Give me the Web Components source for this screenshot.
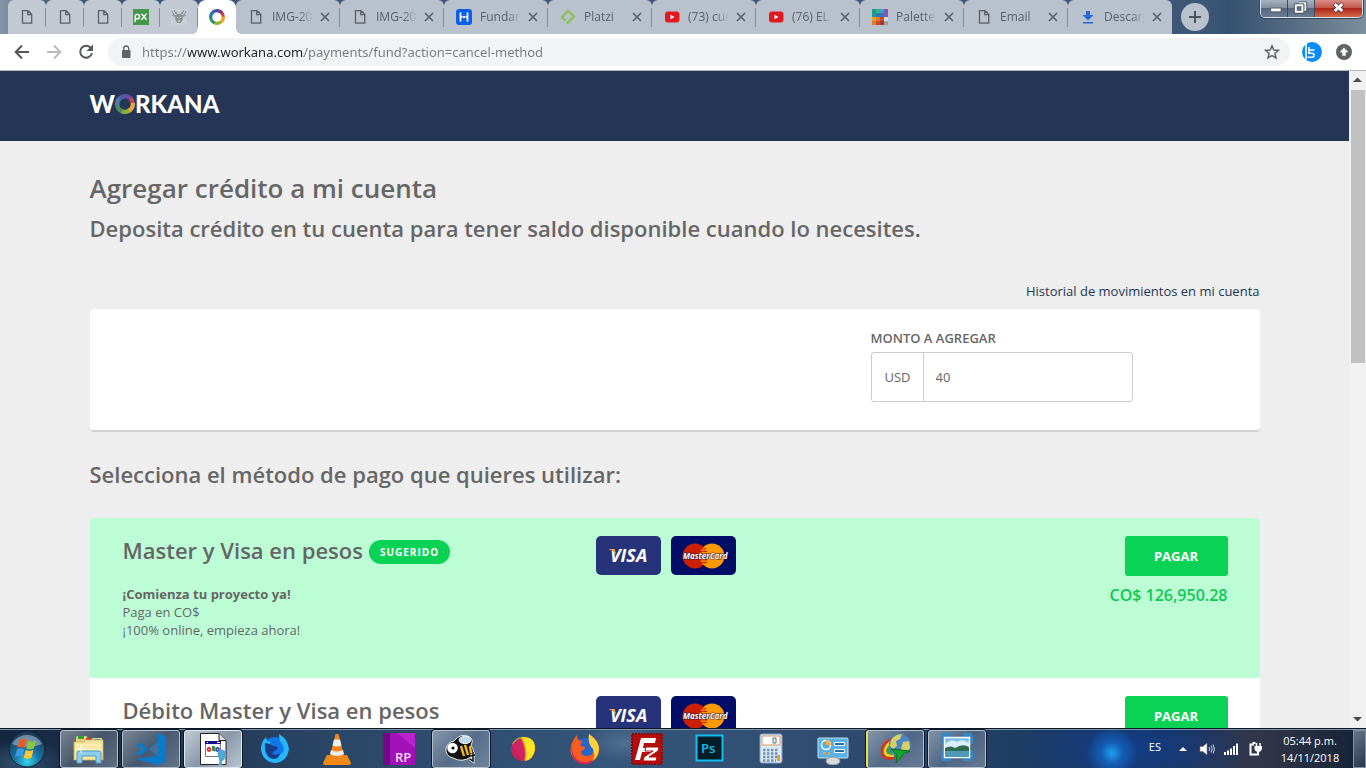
<!DOCTYPE html>
<html lang="es">
<head>
<meta charset="utf-8">
<title>Workana - Agregar crédito a mi cuenta</title>
<style>
  html, body { margin: 0; height: 100%; }
  body { font-family: "Open Sans", "Noto Sans", sans-serif; overflow: hidden; }
</style>
</head>
<body>
<desktop-screen></desktop-screen>

<script>
const define = (name, html, setup) => {
  const template = document.createElement('template');
  template.innerHTML = html;
  customElements.define(name, class extends HTMLElement {
    constructor() {
      super();
      this.attachShadow({ mode: 'open' }).append(template.content.cloneNode(true));
    }
    connectedCallback() { if (setup) setup(this, this.shadowRoot); }
  });
};

const icons = {
  file: ['0 0 16 16', '<path d="M3.500 1.700h5.600l3.600 3.600v8.900H3.500z M8.800 2v3.700h3.700" fill="none" stroke="#5b5f66" stroke-width="1.300"/>'],
  px: ['0 0 16 16', '<path fill="#45984b" d="M0 0h16v16H0z"/><path d="M2.200 13V7.500a2.200 2.200 0 1 1 2.200 2.300H3M8.500 4.600l5 6.200M13.500 4.600l-5 6.200" fill="none" stroke="#fff" stroke-width="1.400"/>'],
  deer: ['0 0 16 16', '<path fill="#c9ced4" d="M0 0h16v16H0z"/><path d="M1 2l2 4 3 1M15 2l-2 4-3 1M3 1l2 4M13 1l-2 4M1 6l4 2M15 6l-4 2M5 3l2 4M11 3L9 7" fill="none" stroke="#858b90"/><path d="M5 6l3-1 3 1 1 4-2 4H6l-2-4z" fill="#8d9296"/><path d="M6 8l1 1M10 8L9 9M7 12h2" stroke="#e9ecef"/>'],
  ring: ['0 0 16 16', '<g fill="none" stroke-width="3.200"><path d="M8 1.700A6.300 6.300 0 0 1 13.500 5" stroke="#7a3a86"/><path d="M12.700 3.800A6.300 6.300 0 0 1 14.300 8" stroke="#d2413f"/><path d="M14.300 7.500A6.300 6.300 0 0 1 10.500 13.800" stroke="#f2a11f"/><path d="M11.300 13.300A6.300 6.300 0 0 1 5 13.500" stroke="#86b735"/><path d="M5.500 13.800A6.300 6.300 0 0 1 1.700 8" stroke="#33926b"/><path d="M1.700 8.500A6.300 6.300 0 0 1 4.300 2.900" stroke="#2b79b9"/><path d="M3.800 3.300A6.300 6.300 0 0 1 8.500 1.700" stroke="#4355a2"/></g>'],
  hh: ['0 0 16 16', '<rect width="16" height="16" rx="3" fill="#0d5fe8"/><path d="M4.500 3.500v9M11.500 3.500v9" stroke="#fff" stroke-width="1.700"/><path d="M5 8h1.500M9.500 8H11" stroke="#fff" stroke-width="1.400"/><circle cx="8" cy="8" r="1.200" fill="#fff"/>'],
  platzi: ['0 0 16 16', '<path d="M5.500 11.500L2 8l6.200-6.300L14 7.500l-6.500 6.600" fill="none" stroke="#8cc152" stroke-width="2.200" stroke-linejoin="round"/><circle cx="7.500" cy="14" r="1.300" fill="#8cc152"/>'],
  youtube: ['0 0 16 16', '<rect x="1" y="2.500" width="14.500" height="11" rx="3" fill="#e11a22"/><path d="M6.500 5.700v4.600L10.500 8z" fill="#fff"/>'],
  palette: ['0 0 16 16', '<path fill="#1f9b8e" d="M0 0h4v8H0z"/><path fill="#2eb67d" d="M4 0h4v4H4z"/><path fill="#3fa0d0" d="M8 0h4v4H8z"/><path fill="#3277b5" d="M4 4h8v4H4z"/><path fill="#8657aa" d="M12 0h4v8h-4z"/><path fill="#dfa52f" d="M0 8h4v4H0z"/><path fill="#da7b20" d="M4 8h4v4H4zM0 12h4v4H0z"/><path fill="#cf4634" d="M8 8h4v4H8zM4 12h4v4H4z"/><path fill="#a93226" d="M8 12h4v4H8z"/><path fill="#d6dadd" d="M12 8h4v4h-4z"/><path fill="#98a1a9" d="M12 12h4v4h-4z"/>'],
  download: ['0 0 16 16', '<path fill="#2468d6" d="M6 2h4v4h3.500L8 11.500 2.500 6H6zM3 13h10v1.500H3z"/>'],
  close: ['0 0 12 12', '<path d="M2 2l8 8M10 2l-8 8" stroke="#585d64" stroke-width="1.600"/>'],
  plus: ['0 0 28 28', '<circle cx="14" cy="14" r="14" fill="#b9c1cd"/><path d="M14 8v12M8 14h12" stroke="#4b5057" stroke-width="2"/>'],
  back: ['0 0 20 20', '<path d="M17 10H4M10 3.500L3.700 10l6.300 6.500" fill="none" stroke="#55585d" stroke-width="2"/>'],
  forward: ['0 0 20 20', '<path d="M3 10h13M10 3.500l6.300 6.500-6.300 6.500" fill="none" stroke="#babbbd" stroke-width="2"/>'],
  reload: ['0 0 20 20', '<path d="M15.300 6.500A6 6 0 1 0 16 11.300" fill="none" stroke="#55585d" stroke-width="2"/><path d="M17 2.500v6.500h-6.500z" fill="#55585d"/>'],
  lock: ['0 0 16 16', '<rect x="4" y="6" width="8.500" height="8" rx="1" fill="#5f6368"/><path d="M5.700 6V4.500a2.500 2.500 0 0 1 5 0V6" fill="none" stroke="#5f6368" stroke-width="1.300"/>'],
  star: ['0 0 20 20', '<path d="M10 3.800l1.800 4.200 4.600.4-3.500 3 1.100 4.500-4-2.400-4 2.400 1.100-4.500-3.500-3 4.600-.4z" fill="none" stroke="#5f6368" stroke-width="1.500"/>'],
  ext: ['0 0 20 20', '<circle cx="10" cy="10" r="10" fill="#0a8bfa"/><path d="M4 2v15.500M12.500 8H7v3.300h3a2 2 0 0 1 0 4H5.500M7 5v4" fill="none" stroke="#fff" stroke-width="1.600"/>'],
  update: ['0 0 20 20', '<circle cx="10" cy="10" r="8" fill="#5f6368"/><path d="M10 5.500l4.300 4.700h-2.600v3.600H8.300v-3.600H5.700z" fill="#fff"/>'],
  min: ['0 0 26 18', '<rect x="9.500" y="8.500" width="11" height="4" fill="#fff" stroke="#59626d"/>'],
  restore: ['0 0 26 18', '<path d="M10.500 3.500h7v7h-2" fill="none" stroke="#48515d" stroke-width="4"/><path d="M10.500 3.500h7v7h-2" fill="none" stroke="#fff" stroke-width="2"/><rect x="7.500" y="5.500" width="7" height="7" fill="#5b6b7e" stroke="#48515d" stroke-width="4"/><rect x="7.500" y="5.500" width="7" height="7" fill="#5b6b7e" stroke="#fff" stroke-width="2"/>'],
  winclose: ['0 0 48 18', '<path d="M19.500 4l9 8M28.500 4l-9 8" stroke="#574347" stroke-width="5"/><path d="M20 4.400l8 7.200M28 4.400l-8 7.200" stroke="#fff" stroke-width="3"/>'],
  up: ['0 0 17 17', '<path d="M4 11h9L8.500 6.500z" fill="#4a4a4a"/>'],
  down: ['0 0 17 17', '<path d="M4 6h9l-4.500 4.500z" fill="#4a4a4a"/>'],
  visa: ['0 0 65 39', '<rect width="65" height="39" rx="5" fill="#26337a"/><text x="14" y="26" font-family="Open Sans" font-size="18" font-weight="700" font-style="italic" fill="#fff">VISA</text><path d="M13 13h5.500l2.500 7c-1.500-3-4-5.500-8-6.500z" fill="#f2a12e"/>'],
  master: ['0 0 65 39', '<rect width="65" height="39" rx="5" fill="#000c66"/><circle cx="41" cy="20" r="12.500" fill="#ff9a00"/><circle cx="24" cy="20" r="12.500" fill="#cc1f00"/><path d="M32.500 11a12.500 12.500 0 0 1 0 18 12.500 12.500 0 0 1 0-18" fill="#ff9a00"/><path d="M30 13h5M29 15.500h7M28 18h8M28 24h8M29 26.500h7" stroke="#cc1f00" stroke-width="1.200"/><text x="12" y="23" font-family="Open Sans" font-size="8" font-weight="700" font-style="italic" fill="#fff" stroke="#3a1633" stroke-width="1" paint-order="stroke">MasterCard</text>'],
  start: ['0 0 40 40', '<defs><radialGradient id="o" cx=".5" cy=".85" r=".75"><stop offset="0" stop-color="#33d6ee"/><stop offset=".45" stop-color="#1a75a6"/><stop offset="1" stop-color="#1b3a58"/></radialGradient></defs><circle cx="20" cy="20" r="18" fill="url(#o)" stroke="#10202f"/><path d="M5 15a16 14 0 0 1 30 0c-9 4-20 4-30 0z" fill="#d5e4ee" opacity=".45"/><path d="M12.500 11c3-1.700 5-1.300 7.300 0l-2 7.800c-2.300-1.300-4.500-1.300-7.300 0z" fill="#ef5a24"/><path d="M21.200 11.700c2.500 1.300 4.800 1.300 7.800 0l-2.200 7.800c-3 1.300-5 1.200-7.500 0z" fill="#8cc63e"/><path d="M10 20.300c3-1.500 5-1.200 7.300 0l-2 7.700c-2.300-1.300-4.500-1.300-7.300 0z" fill="#3f9be0"/><path d="M18.800 21c2.500 1.300 4.700 1.300 7.700 0l-2.200 7.700c-2.800 1.300-5 1.200-7.500 0z" fill="#fdc82f"/>'],
  explorer: ['0 0 32 32', '<path d="M3 5l1-2h9l2 2h14v22H3z" fill="#e7cf7c"/><path d="M5 3h6v3H5z" fill="#2aa63a"/><path d="M13 5h6v3h-6z" fill="#d33a2f"/><path d="M21 6h6v3h-6z" fill="#2f93d8"/><path d="M1 9h10l2-2h17v20H1z" fill="#f7e6a2" stroke="#cfae52" stroke-width=".8"/><path d="M3 12h26M3 16h26" stroke="#fff5c8"/><path d="M4 30V20q0-2 2-2h20q2 0 2 2v10h-5v-7H9v7z" fill="#8fcdec" stroke="#4c9cc9"/><path d="M8 12v8M4 16h8" stroke="#fff" stroke-width="1"/>'],
  vscode: ['0 0 32 32', '<path d="M23 0l8 3.500v25L23 32 1 26l22-3z" fill="#0a7acb"/><path d="M23 0v8L5 22.500l-4-2 4.500-4.500L1 11.500l4-2L23 24v8" fill="#0a7acb"/><path d="M5.500 13.500v5L8.500 16zM14 16l9 7V9z" fill="#506c8e"/>'],
  script: ['0 0 32 32', '<path d="M3.500.5H22l7 7v24H3.500z" fill="#fff" stroke="#222"/><path d="M22 .5v7h7" fill="#ddd" stroke="#222"/><path d="M8.500 8.500h15v15h-15z" fill="#fff" stroke="#777"/><path d="M8 8h16v3H8z" fill="#10108c"/><path d="M10 9.500h1M20 9.500h3" stroke="#fff"/><g fill="none" stroke-width="1.800"><circle cx="12" cy="16.500" r="1.500" stroke="#d33"/><path d="M16 13v5M18 14l-2 2 2 2" stroke="#278a3a"/><circle cx="20.500" cy="16.500" r="1.500" stroke="#3b49c4"/></g><path d="M21 18q4-3 7 0v6q0 3-3 4v4h-4q2-3 1-6-2-4-1-8z" fill="#52a7d8"/>'],
  firedev: ['0 0 32 32', '<circle cx="16" cy="17" r="13" fill="#1176e8"/><path d="M20 1q9 5 10 15-2 13-14 14Q3 28 2 16q0-7 5-12l1 4 4 1q-3 4-1 9 4 8 11 3 5-4 1-10-3-3-3-10z" fill="#25b7fb"/><path d="M6 10q4 0 8 3l5 1q-1 3-4 4l-2 3q5 2 8-1-1 6-7 6-9-2-8-16z" fill="#173b85"/>'],
  vlc: ['0 0 32 32', '<path d="M6 22h20l4 8q0 2-2 2H4q-2 0-2-2z" fill="#f18a14"/><path d="M14.500 1h3l6 24q-7 4-15 0z" fill="#f4851c"/><path d="M13 6.500h6l1.500 6q-4 2-9 0zM10 17q6 3 12 0l1 4q-7 4-14 0z" fill="#eceef0"/>'],
  rp: ['0 0 32 32', '<path d="M0 0h32v32H0z" fill="#a410b8"/><path d="M0 0h5.500v32H0z" fill="#76078c"/><path d="M6 0v32" stroke="#3b0b50"/><path d="M14 0h18v15z" fill="#bd22cf"/><text x="12" y="29" font-family="Open Sans" font-size="13" font-weight="600" fill="#f5dff7">RP</text>'],
  bee: ['0 0 32 32', '<path d="M9 8q7-9 16-4 4 3 1 8 5 8 0 12-9 6-18 1Q0 23 1 15q2-6 8-7z" fill="#111" stroke="#ececec"/><path d="M16 13l3 10M20 12l3 10M25 13l1 7" stroke="#f4b818" stroke-width="2.400"/><ellipse cx="20" cy="7" rx="6" ry="3.700" fill="#bed9ee" stroke="#eef5fa"/><circle cx="7.500" cy="15" r="5.300" fill="#fff"/><circle cx="8" cy="15" r="1.600" fill="#111"/><path d="M25 23l5-1M28 19v9l-3-2" fill="none" stroke="#eee" stroke-width="3"/><path d="M25 23l5-1M28 19v9l-3-2" fill="none" stroke="#111" stroke-width="1.500"/>'],
  fan: ['0 0 32 32', '<circle cx="16" cy="16" r="12" fill="#c8215b"/><path d="M16 28Q11 14 5 11q4-8 12-7z" fill="#8db83c"/><path d="M5 13q3-6 9-8 6 9 6 21l-4 2z" fill="#d22362"/><path d="M14 4q15-1 14 13-2 10-10 11Q20 12 14 4z" fill="#ffe51f"/><path d="M18 28q3-12-4-24" fill="none" stroke="#df9e2c" stroke-width="1.500"/>'],
  firefox: ['0 0 32 32', '<circle cx="16" cy="18" r="13" fill="#2267c9"/><path d="M20 1q8 5 10 13 1 9-6 14-10 6-18-1Q-1 20 3 10q2-5 5-8l1 5 5 1q-4 3-2 5l4 1q0 3-4 4 0 5 6 5 8-1 6-9-4-4-3-13z" fill="#fc5b22"/><path d="M20 1q9 6 10 14 0 9-7 13 4-5 1-12-6-6-4-15z" fill="#ffd23c"/><path d="M3 12q-1 12 8 16 8 3 14-2-4 7-12 5Q0 28 3 12z" fill="#d72756"/>'],
  filezilla: ['0 0 32 32', '<path d="M1 1h30v30H1z" fill="#b50c0c" stroke="#8c0808" stroke-width="2" stroke-dasharray="2 1"/><path d="M10 5h15l-1 5H13l-1 5h9l-1 4h-9l-2 8H4z" fill="#fff"/><path d="M15 14h13l-1 4-9 6h8l-1 4H12l1-4 9-6h-8z" fill="#fff" stroke="#b50c0c"/>'],
  ps: ['0 0 32 32', '<path d="M3.500 2.500h26v25h-26z" fill="#001d27" stroke="#12bdf2" stroke-width="2"/><text x="8" y="20" font-family="Open Sans" font-size="13" font-weight="600" fill="#12bdf2">Ps</text>'],
  calc: ['0 0 32 32', '<rect x="5" y="1" width="22" height="29" rx="2" fill="#dceaf5" stroke="#7fa3c3"/><path d="M7 3h18v9H7z" fill="#fdfefe" stroke="#d79a55"/><path d="M18 5h3v5h-3z" fill="none" stroke="#4a6885"/><path d="M8 17h16M8 20.500h16M8 24h16M8 27.500h13" stroke="#6e93ae" stroke-width="2.500" stroke-dasharray="2.500 1.500"/><path d="M22 22h3v6h-3z" fill="#f39a2b"/>'],
  panel: ['0 0 32 32', '<rect x="1" y="5" width="30" height="20" rx="1" fill="#59b2e6" stroke="#bfe1f5"/><circle cx="9" cy="12" r="4.500" fill="#57aee0" stroke="#fff" stroke-width="1.500"/><path d="M9 12V7a5 5 0 0 1 5 5z" fill="#fbb03b"/><path d="M17.500 9.500h10v3h-10zM17.500 16.500h10v3h-10z" fill="#1f6fa8" stroke="#fff"/><path d="M6 20.500h2M11 20.500h2" stroke="#f9a13a" stroke-width="2.500"/><ellipse cx="16" cy="28" rx="7" ry="4" fill="#d6dadd" stroke="#8e969c"/>'],
  idm: ['0 0 32 32', '<g fill="none" stroke-width="2.600"><path d="M14 25Q1 27 2 17 4 8 13 6" stroke="#e0301e"/><path d="M14 22.500Q4 24 5 17q2-6 8-9" stroke="#f7d21c"/><path d="M14 20Q7 21 8 16q1-3 5-6" stroke="#38a936"/></g><circle cx="20" cy="12" r="11" fill="#4d86c6"/><path d="M11 7q4-6 11-6l-2 5-4 2 1 5-4 3-3-3zM23 9l6-1 1 7-5 6-4-5z" fill="#d8cf63"/><path d="M11 16l19 2-6 3-8 9 1-8z" fill="#14a32b" stroke="#0b6a19"/>'],
  photo: ['0 0 32 32', '<path d="M1 2h9M1 2v9M31 2h-9M31 2v9M1 26h9M1 26v-9M31 26h-9M31 26v-9" stroke="#3586c4" stroke-width="4"/><path d="M3.500 4.500h25v20h-25z" fill="#7cc1ee" stroke="#fff" stroke-width="1.500"/><path d="M4 11q7-6 12-2 6-4 12 1v5H4z" fill="#d9effb"/><path d="M4 15q6-3 10 0 8-5 14-1v5H4z" fill="#2f6b50"/><path d="M4 18h24v6H4z" fill="#4f99b9"/>'],
  tup: ['0 0 16 16', '<path d="M4 10h8L8 6z" fill="#fff"/>'],
  vol: ['0 0 16 16', '<path d="M1 5.500h3L8 2v12l-4-3.500H1z" fill="#fff" stroke="#777" stroke-width=".6"/><path d="M10 6q1.500 2 0 4M12 4.500q2.500 3.500 0 7M14 3.500q3 4.500 0 9" fill="none" stroke="#d4d9df"/>'],
  signal: ['0 0 16 16', '<path d="M2 11v3M5 9.500V14M8 7.500V14M11 5v9M14 2.500V14" stroke="#fff" stroke-width="2"/>'],
  power: ['0 0 16 16', '<path d="M7 3.500H3.500v10H11V11" fill="none" stroke="#fff" stroke-width="2"/><path d="M5.500 2h3" stroke="#fff" stroke-width="2"/><path d="M7.500 5H15v3q-1 3-3 3h-1.500q-3-1-3-3z" fill="#fff"/><path d="M9.500 2v3M13 2v3M11 10v4" stroke="#fff" stroke-width="1.500"/>'],
  logoring: ['0 0 20 20', '<g fill="none" stroke-width="4.400"><path d="M10 2.200A7.800 7.800 0 0 1 16 5.200" stroke="#75489b"/><path d="M15.500 4.500A7.800 7.800 0 0 1 17.800 10" stroke="#bd4b59"/><path d="M17.800 9A7.800 7.800 0 0 1 13 17.200" stroke="#e8a737"/><path d="M14 16.700A7.800 7.800 0 0 1 6.500 17" stroke="#8cae3e"/><path d="M7 17.200A7.800 7.800 0 0 1 2.200 10" stroke="#468f61"/><path d="M2.200 11A7.800 7.800 0 0 1 5 4" stroke="#4f7cab"/><path d="M4.300 4.700A7.800 7.800 0 0 1 10.500 2.200" stroke="#4b5da9"/></g>']
};

class UiIcon extends HTMLElement {
  static observedAttributes = ['name'];
  constructor() {
    super();
    this.attachShadow({ mode: 'open' }).innerHTML = `
      <style>
        :host { display: block; flex: none; width: var(--w, 16px); height: var(--h, var(--w, 16px)); }
        svg { display: block; width: 100%; height: 100%; }
      </style>
      <svg aria-hidden="true"></svg>`;
  }
  attributeChangedCallback(attribute, before, name) {
    const [box, body] = icons[name];
    const svg = this.shadowRoot.querySelector('svg');
    svg.setAttribute('viewBox', box);
    svg.innerHTML = body;
  }
}
customElements.define('ui-icon', UiIcon);

define('browser-tab', `
  <style>
    :host { display: flex; position: relative; flex: 0 1 104px; min-width: 0; box-sizing: border-box; height: 34px;
      align-items: center; background: #b9c1cd; border-radius: 6px 6px 0 0; }
    :host(:not([active]))::after { content: ""; position: absolute; right: 0; top: 8px; width: 1px; height: 19px; background: #858d99; }
    :host([pinned]) { flex-basis: 38px; background: #c2c9d3; }
    :host([active]) { background: #fff; border-radius: 8px 8px 0 0; z-index: 1; }
    :host([active])::before, :host([active])::after { content: ""; position: absolute; bottom: 0; width: 6px; height: 6px; }
    :host([active])::before { right: 100%; background: radial-gradient(circle at 0 0, transparent 6px, #fff 6px); }
    :host([active])::after { left: 100%; background: radial-gradient(circle at 100% 0, transparent 6px, #fff 6px); }
    :host([last])::after { display: none; }
    button { font: inherit; color: inherit; background: none; border: 0; padding: 0; }
    .tab { flex: 1; min-width: 0; display: flex; align-items: center; gap: 8px; padding-left: 12px; height: 34px; }
    :host([pinned]) .tab { padding-left: 11px; }
    .title { display: block; width: 40px; overflow: hidden; white-space: nowrap; text-align: left; font-size: 12px; line-height: 16px; color: #5a6069;
      -webkit-mask-image: linear-gradient(to right, #000 28px, transparent 41px); }
    .close { width: 12px; margin-right: 9px; --w: 12px; }
    :host([pinned]) .close, :host([pinned]) .title { display: none; }
  </style>
  <button class="tab" role="tab"><ui-icon></ui-icon><span class="title"><slot></slot></span></button>
  <button class="close" aria-label="Cerrar pestaña"><ui-icon name="close"></ui-icon></button>`, (host, root) => {
  root.querySelector('.tab').setAttribute('aria-label', host.textContent || 'Pestaña fijada');
  root.querySelector('.tab ui-icon').setAttribute('name', host.getAttribute('icon'));
});

define('window-controls', `
  <style>
    :host { display: flex; margin: 0 3px 0 auto; align-self: flex-start; height: 18px; box-sizing: border-box;
      border: 1px solid #dbe2ea; border-top: 0; border-radius: 0 0 5px 5px; overflow: hidden; box-shadow: 0 0 0 1px #36465a; }
    button { border: 0; padding: 0; background: linear-gradient(#a7b2c0, #8391a3 45%, #55677d 50%, #6a7d92); border-right: 1px solid #3c4a5c; --h: 17px; --w: 26px; }
    .x { background: linear-gradient(#d98f84, #c4574a 45%, #b0261a 50%, #d36a4c); border: 0; --w: 47px; }
  </style>
  <button aria-label="Minimizar"><ui-icon name="min"></ui-icon></button>
  <button aria-label="Restaurar"><ui-icon name="restore"></ui-icon></button>
  <button class="x" aria-label="Cerrar"><ui-icon name="winclose"></ui-icon></button>`);

define('tab-strip', `
  <style>
    :host { display: flex; align-items: center; height: 34px; padding-left: 8px;
      background: linear-gradient(90deg, #8496a8 0, #3d5876 4%, #3d5876 88%, #365270 90%, #6c8092 98%, #7c8f9f); }
    .new { border: 0; background: none; padding: 0; margin: 0 9px; --w: 28px; }
  </style>
  <slot></slot>
  <button class="new" aria-label="Nueva pestaña"><ui-icon name="plus"></ui-icon></button>
  <window-controls></window-controls>`);

define('browser-toolbar', `
  <style>
    :host { display: flex; align-items: center; gap: 12px; box-sizing: border-box; height: 37px; padding: 0 12px; background: #fff; border-bottom: 1px solid #b4b5b8; --w: 20px; }
    button { border: 0; padding: 0; background: none; }
    .box { flex: 1; display: flex; align-items: center; gap: 8px; height: 28px; padding: 0 8px 0 10px; border-radius: 14px; background: #f1f3f4; }
    .box > ui-icon { --w: 16px; }
    input { flex: 1; min-width: 0; height: 28px; border: 0; padding: 0; outline: 0; font: 13px/28px "Noto Sans", sans-serif; color: #6d7176;
      background: linear-gradient(90deg, #777b80 46px, #202124 46px, #202124 162px, #777b80 162px);
      -webkit-background-clip: text; background-clip: text; -webkit-text-fill-color: transparent; }
  </style>
  <button aria-label="Atrás"><ui-icon name="back"></ui-icon></button>
  <button aria-label="Adelante"><ui-icon name="forward"></ui-icon></button>
  <button aria-label="Recargar"><ui-icon name="reload"></ui-icon></button>
  <div class="box"><ui-icon name="lock"></ui-icon>
    <input aria-label="Dirección" value="https://www.workana.com/payments/fund?action=cancel-method">
    <button aria-label="Marcador"><ui-icon name="star"></ui-icon></button></div>
  <button aria-label="Extensión"><ui-icon name="ext"></ui-icon></button>
  <button aria-label="Actualizar"><ui-icon name="update"></ui-icon></button>`);

define('scroll-bar', `
  <style>
    :host { display: flex; flex-direction: column; flex: none; width: 17px; background: #f1f1f1; --w: 17px; }
    .track { flex: 1; padding: 2px 1px 0 2px; }
    .thumb { height: 44%; background: #c1c1c1; }
  </style>
  <ui-icon name="up"></ui-icon><div class="track"><div class="thumb"></div></div><ui-icon name="down"></ui-icon>`);

define('site-header', `
  <style>
    :host { display: block; background: #253555; }
    .wrap { max-width: 1170px; margin: 0 auto; height: 70px; box-sizing: border-box; padding-top: 17px; }
    a { display: inline-flex; align-items: center; color: #fff; text-decoration: none; font: 900 24px/32px Lato, "Open Sans", sans-serif; --w: 20px; }
  </style>
  <div class="wrap"><a href="#" aria-label="Workana">W<ui-icon name="logoring"></ui-icon>RKANA</a></div>`);

define('amount-card', `
  <style>
    :host { display: flex; justify-content: flex-end; padding: 20px 127px 28px; background: #fff; border-radius: 4px; border-bottom: 2px solid #d0d1d1; }
    .field { flex: 0 1 262px; }
    label { display: block; margin-bottom: 5px; font-size: 13px; line-height: 18px; font-weight: 600; }
    .group { display: flex; height: 50px; box-sizing: border-box; border: 1px solid #ccc; border-radius: 3px; font-size: 13px; }
    .unit { padding: 0 12px 0 13px; line-height: 48px; border-right: 1px solid #ccc; }
    input { flex: 1; min-width: 0; border: 0; outline: 0; padding: 0 12px; background: none; font: inherit; color: inherit; }
  </style>
  <div class="field"><label for="amount">MONTO A AGREGAR</label>
    <div class="group"><span class="unit">USD</span><input id="amount" value="40"></div></div>`);

define('payment-method', `
  <style>
    :host { display: grid; grid-template-columns: 3fr 3fr 1fr; box-sizing: border-box; min-height: 160px; padding: 18px 32px 18px 33px; background: #fff; --w: 65px; --h: 39px; }
    :host([suggested]) { background: #bcfdd6; border-radius: 4px; }
    h3 { display: flex; align-items: end; gap: 6px; margin: 0 0 21px; font-size: 22px; line-height: 28px; font-weight: 600; white-space: nowrap; }
    .badge { display: none; padding: 0 11px; border-radius: 12px; background: #0ad254; color: #fff; font-size: 10px; line-height: 24px; font-weight: 700; letter-spacing: 1px; }
    :host([suggested]) .badge { display: block; }
    .desc { font-size: 13px; line-height: 18px; }
    .cards { display: flex; gap: 10px; }
    .pay { display: flex; flex-direction: column; align-items: flex-end; gap: 8px; }
    button { width: 103px; height: 40px; border: 0; border-radius: 3px; background: #0ad254; color: #fff; font: 700 13px/18px "Open Sans", sans-serif; }
    .price { color: #0fc853; font-size: 16px; line-height: 22px; font-weight: 600; white-space: nowrap; }
  </style>
  <div><h3><slot name="name"></slot><span class="badge">SUGERIDO</span></h3><div class="desc"><slot></slot></div></div>
  <div class="cards"><ui-icon name="visa"></ui-icon><ui-icon name="master"></ui-icon></div>
  <div class="pay"><button>PAGAR</button><span class="price"><slot name="price"></slot></span></div>`);

define('fund-page', `
  <style>
    :host { display: block; flex: 1; min-width: 0; overflow: hidden; background: #eee; color: #666; }
    main { max-width: 1170px; margin: 0 auto; padding-top: 29px; }
    h1, h2 { margin: 0; font-weight: 600; }
    h1 { font-size: 26px; line-height: 36px; margin-bottom: 8px; }
    h2 { font-size: 22px; line-height: 28px; }
    .history { margin: 40px 0 9px; text-align: right; font-size: 13px; line-height: 18px; }
    .history a { color: #253555; text-decoration: none; }
    .choose { margin: 28px 0 30px; }
  </style>
  <site-header></site-header>
  <main>
    <h1>Agregar crédito a mi cuenta</h1>
    <h2>Deposita crédito en tu cuenta para tener saldo disponible cuando lo necesites.</h2>
    <div class="history"><a href="#">Historial de movimientos en mi cuenta</a></div>
    <amount-card></amount-card>
    <h2 class="choose">Selecciona el método de pago que quieres utilizar:</h2>
    <payment-method suggested><span slot="name">Master y Visa en pesos</span><b>¡Comienza tu proyecto ya!</b><br>Paga en CO$<br>¡100% online, empieza ahora!<span slot="price">CO$ 126,950.28</span></payment-method>
    <payment-method><span slot="name">Débito Master y Visa en pesos</span></payment-method>
  </main>`);

define('task-button', `
  <style>
    :host { display: block; flex: 0 1 58px; }
    button { display: flex; align-items: center; justify-content: center; width: 100%; height: 38px; padding: 0; box-sizing: border-box; border: 1px solid transparent; border-radius: 3px; background: none; --w: 32px; }
    :host([open]) button { border-color: #b5bfcc; background: linear-gradient(135deg, rgba(255,255,255,.42), rgba(255,255,255,.18) 50%, rgba(255,255,255,.3)); box-shadow: 0 0 0 1px #0e1b2b; }
    :host([front]) button { background: linear-gradient(135deg, #c3ccd6, #8797a9 50%, #b8c3cf); border-color: #dfe6ed; }
    :host([alert]) button { border-left: 2px solid #e8e04a; }
  </style>
  <button><ui-icon></ui-icon></button>`, (host, root) => {
  const name = host.getAttribute('icon');
  root.querySelector('button').setAttribute('aria-label', name);
  root.querySelector('ui-icon').setAttribute('name', name);
});

define('task-bar', `
  <style>
    :host { display: flex; align-items: center; gap: 4px; box-sizing: border-box; height: 40px; padding-left: 7px; color: #fff; border-top: 1px solid #0d1826; box-shadow: inset 0 1px #8195aa;
      background: radial-gradient(circle 26px at 1112px 24px, #1fa0ee, #145fb6 40%, transparent),
        radial-gradient(ellipse 120px 50px at 1130px 20px, #123d86, transparent),
        radial-gradient(ellipse 40px 20px at 625px 14px, #52708f, transparent),
        radial-gradient(ellipse 50px 24px at 20px 34px, #33506f, transparent),
        linear-gradient(90deg, #15263f, #2b4767 25%, #35557a 45%, #304d70 60%, #1f3d63 75%, #1b335c 85%, #33364a 92%, #142237); }
    .start { border: 0; background: none; padding: 0; margin-right: 9px; --w: 40px; }
    .tray { margin-left: auto; display: flex; align-items: center; gap: 8px; font-size: 11px; }
    .lang { margin-right: 6px; line-height: 16px; padding-bottom: 4px; }
    .clock { width: 70px; text-align: center; line-height: 17px; padding-left: 4px; }
    .peek { width: 13px; height: 38px; box-sizing: border-box; border: 1px solid #8190a2; background: linear-gradient(135deg, #66758a, #26374e); padding: 0; }
  </style>
  <button class="start" aria-label="Inicio"><ui-icon name="start"></ui-icon></button>
  <slot></slot>
  <div class="tray"><span class="lang">ES</span><ui-icon name="tup"></ui-icon><ui-icon name="vol"></ui-icon><ui-icon name="signal"></ui-icon><ui-icon name="power"></ui-icon>
    <div class="clock">05:44 p.m.<br>14/11/2018</div><button class="peek" aria-label="Mostrar escritorio"></button></div>`);

define('desktop-screen', `
  <style>
    :host { display: flex; flex-direction: column; height: 100vh; }
    .view { flex: 1; min-height: 0; display: flex; }
  </style>
  <tab-strip>
    <browser-tab pinned icon="file"></browser-tab><browser-tab pinned icon="file"></browser-tab><browser-tab pinned icon="file"></browser-tab>
    <browser-tab pinned icon="px"></browser-tab><browser-tab pinned icon="deer"></browser-tab><browser-tab pinned active icon="ring"></browser-tab>
    <browser-tab icon="file">IMG-20</browser-tab><browser-tab icon="file">IMG-20</browser-tab>
    <browser-tab icon="hh">Fundam</browser-tab><browser-tab icon="platzi">Platzi</browser-tab>
    <browser-tab icon="youtube">(73) cur</browser-tab><browser-tab icon="youtube">(76) EL</browser-tab>
    <browser-tab icon="palette">Palettes</browser-tab><browser-tab icon="file">Email</browser-tab><browser-tab last icon="download">Descarg</browser-tab>
  </tab-strip>
  <browser-toolbar></browser-toolbar>
  <div class="view"><fund-page></fund-page><scroll-bar></scroll-bar></div>
  <task-bar>
    <task-button open icon="explorer"></task-button><task-button open icon="vscode"></task-button><task-button open front icon="script"></task-button>
    <task-button icon="firedev"></task-button><task-button icon="vlc"></task-button><task-button icon="rp"></task-button>
    <task-button open icon="bee"></task-button><task-button icon="fan"></task-button><task-button icon="firefox"></task-button>
    <task-button icon="filezilla"></task-button><task-button icon="ps"></task-button><task-button icon="calc"></task-button>
    <task-button icon="panel"></task-button><task-button open alert icon="idm"></task-button><task-button open icon="photo"></task-button>
  </task-bar>`);
</script>
</body>
</html>
